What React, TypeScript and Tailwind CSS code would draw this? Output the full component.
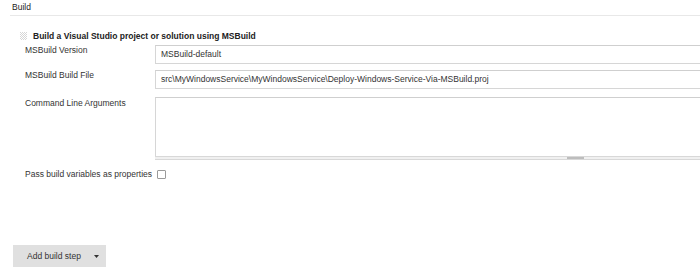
import React from 'react'

// little dotted drag grip shown left of the step title
function Grip() {
  const dots = []
  for (let y = 0; y < 8; y++) {
    for (let x = 0; x < 7; x++) {
      if ((x + y) % 2 === 0) dots.push(<rect key={`${x}-${y}`} x={x} y={y} width="1" height="1" />)
    }
  }
  return (
    <svg width="7" height="8" viewBox="0 0 7 8" className="fill-[#d6d6d6] shrink-0">
      {dots}
    </svg>
  )
}

function Label({ children }: { children: React.ReactNode }) {
  return (
    <div className="w-[155px] shrink-0 pl-[25px] text-[8.5px] leading-[10px] text-[#333]">
      {children}
    </div>
  )
}

export default function App() {
  return (
    <div className="w-[700px] h-[270px] bg-white overflow-hidden font-['Liberation_Sans',Arial,sans-serif] text-[#333]">
      {/* Section header */}
      <div className="ml-[10px] h-[16px] pt-[3px] pl-[2px] border-b border-[#e8e8e8] text-[8.5px] leading-[8px] text-[#222]">
        Build
      </div>

      {/* Build step title */}
      <div className="flex items-start gap-[6px] mt-[15px] ml-[20px] h-[10px]">
        <div className="mt-[1px]">
          <Grip />
        </div>
        <span className="text-[8.5px] leading-[10px] font-bold text-[#222]">
          Build a Visual Studio project or solution using MSBuild
        </span>
      </div>

      {/* Fields */}
      <div className="mt-[4px] flex flex-col">
        <div className="flex items-start">
          <Label>MSBuild Version</Label>
          <div className="w-[841px] shrink-0 h-[19px] border border-[#d6d6d6] border-t-[#cfcfcf] flex items-center pl-[5px] text-[8.5px] text-[#333]">
            MSBuild-default
          </div>
        </div>

        <div className="flex items-start mt-[6px]">
          <Label>MSBuild Build File</Label>
          <div className="w-[841px] shrink-0 h-[19px] border border-[#d6d6d6] border-t-[#cfcfcf] flex items-center pl-[5px] text-[8.5px] text-[#333]">
            src\MyWindowsService\MyWindowsService\Deploy-Windows-Service-Via-MSBuild.proj
          </div>
        </div>

        <div className="flex items-start mt-[8px]">
          <div className="pt-[1px]">
            <Label>Command Line Arguments</Label>
          </div>
          <div className="w-[841px] shrink-0 flex flex-col">
            <div className="h-[59px] border border-[#d6d6d6] border-b-0 border-t-[#cfcfcf]" />
            <div className="h-[4px] bg-[#f0f0f0] border-y border-[#d8d8d8] flex justify-center">
              <div className="w-[17px] h-full bg-[#bdbdbd]" />
            </div>
          </div>
        </div>

        <div className="flex items-center mt-[9px] pl-[25px] h-[10px]">
          <span className="text-[8.5px] leading-[10px] text-[#333]">Pass build variables as properties</span>
          <div className="ml-[5px] w-[9px] h-[9px] border border-[#9a9a9a] rounded-[1px] bg-white" />
        </div>
      </div>

      {/* Add build step button */}
      <div className="mt-[66px] ml-[13px]">
        <button className="w-[93px] h-[22px] bg-[#e0e0e0] flex items-center pl-[14px] text-[8.5px] text-[#333]">
          Add build step
          <svg width="5" height="3" viewBox="0 0 5 3" className="ml-[13px] fill-[#333]">
            <path d="M0 0 H5 L2.5 3 Z" />
          </svg>
        </button>
      </div>
    </div>
  )
}
